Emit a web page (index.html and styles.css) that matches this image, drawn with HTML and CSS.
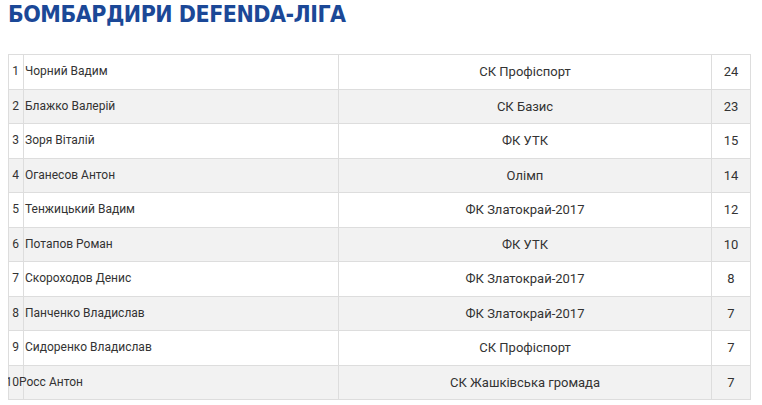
FILE: index.html
```html
<!DOCTYPE html>
<html lang="uk">
<head>
<meta charset="utf-8">
<link rel="stylesheet" href="styles.css">
</head>
<body>
<h1 class="title">БОМБАРДИРИ DEFENDA-ЛІГА</h1>
<table class="scorers">
  <colgroup>
    <col class="c-num"><col class="c-name"><col class="c-team"><col class="c-goals">
  </colgroup>
  <tbody>
    <tr><td class="num"><span class="num-in">1</span></td><td class="name">Чорний Вадим</td><td class="team">СК Профіспорт</td><td class="goals">24</td></tr>
    <tr><td class="num"><span class="num-in">2</span></td><td class="name">Блажко Валерій</td><td class="team">СК Базис</td><td class="goals">23</td></tr>
    <tr><td class="num"><span class="num-in">3</span></td><td class="name">Зоря Віталій</td><td class="team">ФК УТК</td><td class="goals">15</td></tr>
    <tr><td class="num"><span class="num-in">4</span></td><td class="name">Оганесов Антон</td><td class="team">Олімп</td><td class="goals">14</td></tr>
    <tr><td class="num"><span class="num-in">5</span></td><td class="name">Тенжицький Вадим</td><td class="team">ФК Златокрай-2017</td><td class="goals">12</td></tr>
    <tr><td class="num"><span class="num-in">6</span></td><td class="name">Потапов Роман</td><td class="team">ФК УТК</td><td class="goals">10</td></tr>
    <tr><td class="num"><span class="num-in">7</span></td><td class="name">Скороходов Денис</td><td class="team">ФК Златокрай-2017</td><td class="goals">8</td></tr>
    <tr><td class="num"><span class="num-in">8</span></td><td class="name">Панченко Владислав</td><td class="team">ФК Златокрай-2017</td><td class="goals">7</td></tr>
    <tr><td class="num"><span class="num-in">9</span></td><td class="name">Сидоренко Владислав</td><td class="team">СК Профіспорт</td><td class="goals">7</td></tr>
    <tr><td class="num"><span class="num-in">10</span></td><td class="name name-tight">Росс Антон</td><td class="team">СК Жашківська громада</td><td class="goals">7</td></tr>
  </tbody>
</table>
</body>
</html>
```
FILE: styles.css
```css
html, body {
  background: #fff;
}
body {
  margin: 0 8px;
  font-family: Roboto, "Liberation Sans", sans-serif;
  color: #333;
}
.title {
  margin: 3px 0 28px;
  font-family: "DejaVu Sans Condensed", "DejaVu Sans", sans-serif;
  font-weight: bold;
  font-size: 23px;
  line-height: 23px;
  letter-spacing: -0.5px;
  color: #1b4897;
}
.scorers {
  width: 742px;
  border-collapse: collapse;
  table-layout: fixed;
  font-size: 13px;
}
.c-num { width: 15px; }
.c-name { width: 315px; }
.c-team { width: 373px; }
.c-goals { width: 39px; }
.scorers td {
  border: 1px solid #ddd;
  padding: 8px 1px;
  line-height: 17.5px;
  white-space: nowrap;
}
.scorers tr:nth-child(even) td {
  background: #f2f2f2;
}
.scorers .num {
  font-size: 12px;
  padding-right: 4px;
  padding-left: 0;
}
.num-in {
  display: block;
  margin-left: -10px;
  text-align: right;
}
.scorers .name {
  font-size: 12px;
}
.scorers .name-tight {
  text-indent: -6px;
}
.team, .goals {
  text-align: center;
}
```
